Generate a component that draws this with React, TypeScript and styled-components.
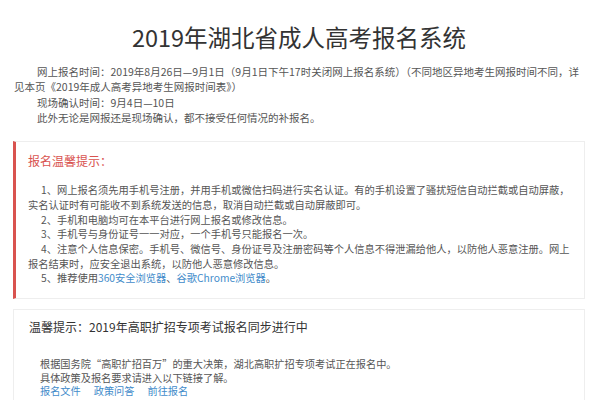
import React from 'react';
import styled, { createGlobalStyle } from 'styled-components';

const GlobalStyle = createGlobalStyle`
  html, body {
    margin: 0;
    padding: 0;
    background: #fff;
  }
  body {
    font-family: "Noto Sans CJK SC", "Noto Sans", sans-serif;
    color: #555;
  }
`;

const Page = styled.div`
  width: 598px;
  height: 400px;
  overflow: hidden;
  box-sizing: border-box;
  padding: 0 13px;
`;

const Title = styled.h1`
  margin: 22px 0 12px;
  color: #333;
  font-size: 23.5px;
  font-weight: 400;
  line-height: 30px;
  text-align: center;
`;

const Intro = styled.div`
  padding-left: 1px;
  font-size: 10.5px;
  line-height: 15.3px;

  p {
    margin: 0;
    text-indent: 23px;
  }
`;

const Card = styled.section<{ $accent?: boolean }>`
  margin-top: ${({ $accent }) => ($accent ? '16px' : '10px')};
  border: 1px solid #eee;
  border-left: ${({ $accent }) => ($accent ? '3px solid #d9534f' : '1px solid #eee')};
  background: #fff;
  padding: ${({ $accent }) => ($accent ? '9px 10px 12px 12px' : '7px 15px 12px')};
`;

const CardTitle = styled.h2<{ $red?: boolean }>`
  margin: 0;
  color: ${({ $red }) => ($red ? '#d9534f' : '#333')};
  font-size: 12px;
  font-weight: 400;
  line-height: 20px;
`;

const Tips = styled.ol`
  margin: 12px 0 0;
  padding: 0;
  list-style: none;
  font-size: 10.25px;
  line-height: 14.7px;

  li {
    text-indent: 13px;
  }
`;

const Notice = styled.div`
  margin-top: 20px;
  padding-left: 11px;
  font-size: 10.2px;
  line-height: 13.5px;

  p {
    margin: 0;
  }
`;

// full-width CJK quotation marks
const Quote = styled.span<{ $close?: boolean }>`
  display: inline-block;
  width: 1em;
  text-align: ${({ $close }) => ($close ? 'left' : 'right')};
`;

const Link = styled.a<{ $inline?: boolean }>`
  color: #428bca;
  text-decoration: none;
  margin-right: ${({ $inline }) => ($inline ? '0' : '13px')};
`;

const tips = [
  '1、网上报名须先用手机号注册，并用手机或微信扫码进行实名认证。有的手机设置了骚扰短信自动拦截或自动屏蔽，实名认证时有可能收不到系统发送的信息，取消自动拦截或自动屏蔽即可。',
  '2、手机和电脑均可在本平台进行网上报名或修改信息。',
  '3、手机号与身份证号一一对应，一个手机号只能报名一次。',
  '4、注意个人信息保密。手机号、微信号、身份证号及注册密码等个人信息不得泄漏给他人，以防他人恶意注册。网上报名结束时，应安全退出系统，以防他人恶意修改信息。',
];

export default function App() {
  return (
    <>
      <GlobalStyle />
      <Page>
        <Title>2019年湖北省成人高考报名系统</Title>
        <Intro>
          <p>
            网上报名时间：2019年8月26日—9月1日（9月1日下午17时关闭网上报名系统）（不同地区异地考生网报时间不同，详见本页《2019年成人高考异地考生网报时间表》）
          </p>
          <p>现场确认时间：9月4日—10日</p>
          <p>此外无论是网报还是现场确认，都不接受任何情况的补报名。</p>
        </Intro>

        <Card $accent>
          <CardTitle $red>报名温馨提示：</CardTitle>
          <Tips>
            {tips.map(t => (
              <li key={t}>{t}</li>
            ))}
            <li>
              5、推荐使用<Link $inline href="#">360安全浏览器</Link>、
              <Link $inline href="#">谷歌Chrome浏览器</Link>。
            </li>
          </Tips>
        </Card>

        <Card>
          <CardTitle>温馨提示：2019年高职扩招专项考试报名同步进行中</CardTitle>
          <Notice>
            <p>
              根据国务院<Quote>“</Quote>高职扩招百万<Quote $close>”</Quote>的重大决策，湖北高职扩招专项考试正在报名中。
            </p>
            <p>具体政策及报名要求请进入以下链接了解。</p>
            <p>
              <Link href="#">报名文件</Link>
              <Link href="#">政策问答</Link>
              <Link href="#">前往报名</Link>
            </p>
          </Notice>
        </Card>
      </Page>
    </>
  );
}
